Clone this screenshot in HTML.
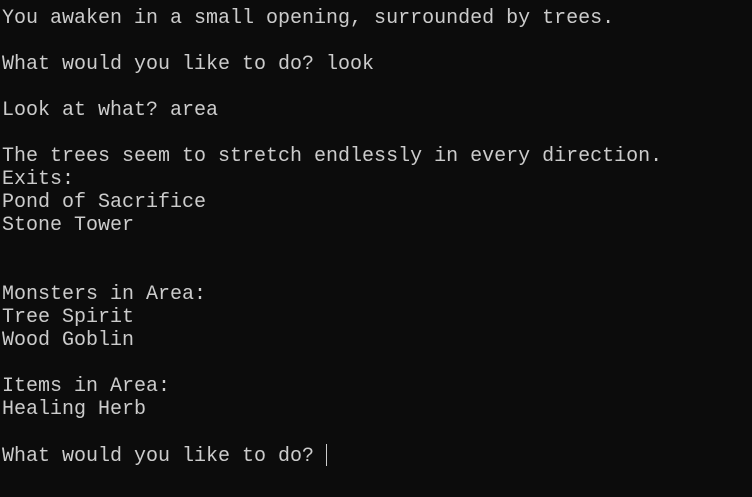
<!DOCTYPE html>
<html><head><style>
html,body{margin:0;padding:0;background:#0c0c0c;width:752px;height:497px;overflow:hidden}
pre{margin:0;padding:7px 0 0 2px;font-family:"Liberation Mono",monospace;font-size:20px;line-height:23px;color:#cccccc;white-space:pre}
.c{display:inline-block;width:1px;height:22px;background:#cccccc;vertical-align:-5px;margin-left:0}
</style></head><body><pre>You awaken in a small opening, surrounded by trees.

What would you like to do? look

Look at what? area

The trees seem to stretch endlessly in every direction.
Exits:
Pond of Sacrifice
Stone Tower


Monsters in Area:
Tree Spirit
Wood Goblin

Items in Area:
Healing Herb

What would you like to do? <span class="c"></span></pre></body></html>
